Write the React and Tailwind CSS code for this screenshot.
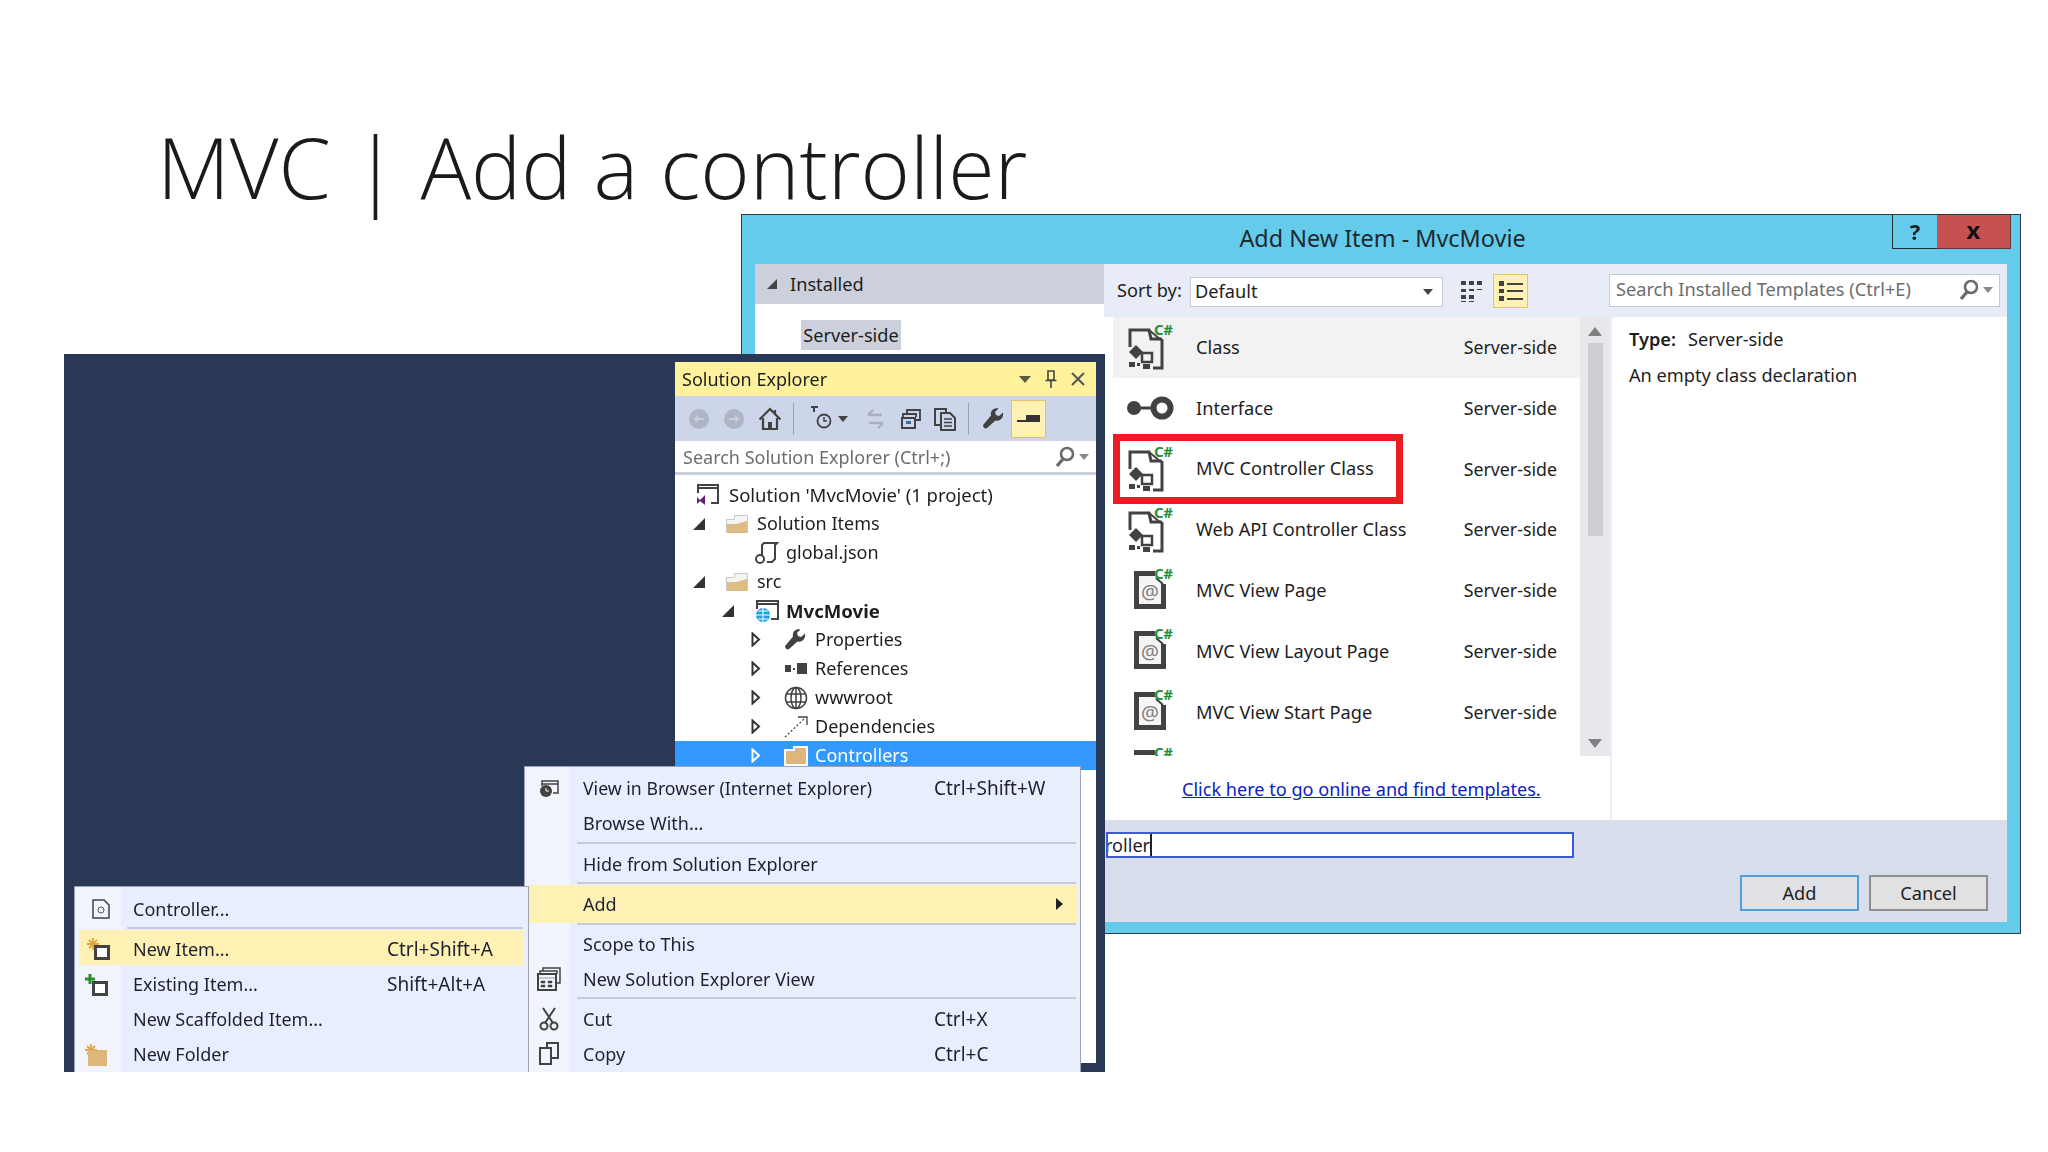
import React from "react";

const FONT = "font-['Noto_Sans','Open_Sans',sans-serif]";

function CsBadge() {
  return <span className="absolute left-[28px] top-0 text-[15px] leading-[14px] font-bold tracking-[-0.5px] text-[#2b8f3a]">C#</span>;
}
function CsIcon() {
  return (
    <div className="relative w-[48px] h-[50px] shrink-0">
      <svg className="absolute left-0 top-0" width="48" height="50" viewBox="0 0 48 50" fill="none">
        <path d="M4 25V8h19l2 9h11" stroke="#424242" strokeWidth="3" fill="none" />
        <path d="M23 8l12 10" stroke="#424242" strokeWidth="2" />
        <path d="M36 17v29h-9" stroke="#424242" strokeWidth="3" />
        <path d="M3 30l7-7 7 7-7 7z" fill="#424242" />
        <path d="M16 31h10v9H16z" stroke="#424242" strokeWidth="2.500" />
        <path d="M3 40h6v5H3zM17 42h7v5h-7zM11 41h3v3h-3z" fill="#424242" />
      </svg>
      <CsBadge />
    </div>
  );
}
function AtIcon() {
  return (
    <div className="relative w-[48px] h-[50px] shrink-0">
      <div className="absolute left-[8px] top-[5px] w-[32px] h-[38px] border-[5px] border-[#424242] bg-[#f5f5f5] flex items-end justify-center">
        <span className="text-[20px] leading-[24px] text-[#808080]">@</span>
      </div>
      <svg className="absolute left-[29px] top-[4px]" width="12" height="14" viewBox="0 0 12 14"><path d="M0 0h12v14H8L0 7z" fill="#fff" /><path d="M1 8l7 6" stroke="#424242" strokeWidth="2" /></svg>
      <CsBadge />
    </div>
  );
}
function ClippedIcon() {
  return (
    <div className="relative w-[48px] h-[50px] shrink-0">
      <div className="absolute left-[8px] top-[5px] w-[21px] h-[5px] bg-[#424242]" />
      <CsBadge />
    </div>
  );
}
function InterfaceIcon() {
  return (
    <svg width="48" height="26" viewBox="0 0 48 26" className="shrink-0">
      <circle cx="8" cy="13" r="7" fill="#424242" />
      <rect x="13" y="11.5" width="14" height="3" fill="#424242" />
      <circle cx="36" cy="13" r="8.500" fill="none" stroke="#424242" strokeWidth="6" />
    </svg>
  );
}
function MagIcon() {
  return (
    <svg width="20" height="22" viewBox="0 0 20 22" fill="none">
      <circle cx="12" cy="8" r="6" stroke="#6b6b6b" strokeWidth="2.6" />
      <path d="M8 13L2 20" stroke="#6b6b6b" strokeWidth="3.4" />
    </svg>
  );
}
function Down({ c = "#6b6b6b" }) {
  return <svg width="10" height="6" viewBox="0 0 10 6"><path d="M0 0h10L5 6z" fill={c} /></svg>;
}
function Wrench({ size = 22 }) {
  return (
    <svg width={size} height={size} viewBox="0 0 22 22" fill="none">
      <path d="M21 4.500l-4 3.500-3-1-1-3 3.500-3.500C12 -.5 8 2.500 9 7.500L1.500 16.500c-1.500 2 1.500 5 3.500 3.500L13.500 12.500C18 14 22 9.500 21 4.500z" fill="#424242" />
    </svg>
  );
}
function NavCircle({ dir, cls }) {
  return (
    <svg className={cls} width="20" height="20" viewBox="0 0 20 20">
      <circle cx="10" cy="10" r="10" fill="#aeb5c4" />
      <path d={dir < 0 ? "M15 9H9V6L4.500 10 9 14v-3h6z" : "M5 9h6V6l4.500 4L11 14v-3H5z"} fill="#c8cedb" />
    </svg>
  );
}

function ListRow({ icon, name, hi }) {
  return (
    <div className={`h-[60.8px] flex items-center pl-[13px] pr-[23px] ${hi ? "bg-[#f2f2f2]" : ""}`}>
      <div className="w-[70px] flex items-center">{icon}</div>
      <span className="flex-1 text-[18.2px] text-[#1e1e1e]">{name}</span>
      <span className="text-[17.8px] text-[#1e1e1e]">Server-side</span>
    </div>
  );
}

function Dialog() {
  return (
    <div className="absolute left-[741px] top-[214px] w-[1280px] h-[720px] bg-[#65cbeb] border border-[#2f3b3f] flex flex-col blur-[0.4px]">
      <div className="relative h-[49px] shrink-0 flex items-center justify-center pl-[3px] text-[23.4px] text-[#1e2a30]">
        <span className="-mt-[1px]">Add New Item - MvcMovie</span>
        <div className="absolute left-[1150px] top-0 w-[45px] h-[34px] border-l border-b border-[#1f2d33] flex items-center justify-center text-[22px] font-bold text-[#1e1e1e]">?</div>
        <div className="absolute left-[1195px] top-0 w-[74px] h-[34px] bg-[#c75050] border-b border-r border-[#5a3a3a] flex items-center justify-center text-[24px] leading-none font-bold text-[#111]"><span className="-mt-[4px]">x</span></div>
      </div>
      <div className="mx-[13px] h-[658px] flex flex-col bg-[#e8ecf7]">
        <div className="flex-1 flex min-h-0">
          <div className="w-[349px] shrink-0 bg-white flex flex-col">
            <div className="h-[40px] bg-[#ccd0dc] flex items-center pl-[12px] gap-[13px] text-[18.2px] text-[#1e1e1e]">
              <svg width="10" height="10" viewBox="0 0 10 10"><path d="M10 0v10H0z" fill="#444" /></svg>
              <span className="mt-[1px]">Installed</span>
            </div>
            <div className="pl-[46px] pt-[16px]">
              <span className="inline-flex h-[30px] w-[100px] items-center justify-center pt-[1px] bg-[#ccd0dc] text-[18.2px] text-[#1e1e1e]">Server-side</span>
            </div>
          </div>
          <div className="flex-1 flex flex-col min-w-0">
            <div className="h-[53px] shrink-0 flex items-center pl-[13px] text-[18.2px] text-[#1e1e1e]">
              <span className="w-[73px] mt-[1px]">Sort by:</span>
              <div className="w-[253px] h-[30px] mt-[3px] bg-white border border-[#c5cad6] flex items-center pl-[4px] pr-[9px] justify-between">
                <span>Default</span>
                <Down c="#444" />
              </div>
              <svg className="ml-[18px]" width="22" height="24" viewBox="0 0 22 24">
                <path d="M0 2h5v4H0zM8 2h5v4H8zM16 2h5v4h-5zM0 10h5v3H0zM8 10h5v2H8zM16 10h5v1h-5zM0 16h5v4H0zM8 16h5v4H8zM0 22h5v1H0zM8 22h5v1H8z" fill="#424242" />
              </svg>
              <div className="ml-[10px] w-[35px] h-[34px] bg-[#fff1b3] border border-[#e5c365] flex items-center justify-center">
                <svg width="24" height="22" viewBox="0 0 24 22">
                  <path d="M0 1h5v5H0zM0 9h5v4H0zM0 16h5v5H0z" fill="#424242" />
                  <path d="M8 3h16v2H8zM8 10h16v2H8zM8 18h16v2H8z" fill="#424242" />
                </svg>
              </div>
              <div className="ml-[81px] w-[391px] h-[33px] -mt-[1px] bg-white border border-[#c5cad6] flex items-center pl-[6px] pr-[6px] justify-between">
                <span className="text-[#6d6d6d]">Search Installed Templates (Ctrl+E)</span>
                <div className="flex items-center gap-[4px]"><MagIcon /><Down c="#888" /></div>
              </div>
            </div>
            <div className="flex-1 flex min-h-0">
              <div className="w-[506px] shrink-0 flex flex-col bg-white">
                <div className="flex h-[439px] shrink-0">
                  <div className="w-[476px] shrink-0 overflow-hidden pl-[9px] bg-white">
                    <ListRow hi icon={<CsIcon />} name="Class" />
                    <ListRow icon={<InterfaceIcon />} name="Interface" />
                    <ListRow icon={<CsIcon />} name="MVC Controller Class" />
                    <ListRow icon={<CsIcon />} name="Web API Controller Class" />
                    <ListRow icon={<AtIcon />} name="MVC View Page" />
                    <ListRow icon={<AtIcon />} name="MVC View Layout Page" />
                    <ListRow icon={<AtIcon />} name="MVC View Start Page" />
                    <div className="pl-[13px] pt-[2px]"><ClippedIcon /></div>
                  </div>
                  <div className="w-[30px] shrink-0 bg-[#e8e8ec] flex flex-col items-center pt-[10px] pb-[8px]">
                    <svg width="14" height="9" viewBox="0 0 14 9"><path d="M7 0l7 9H0z" fill="#808080" /></svg>
                    <div className="w-[15px] h-[193px] bg-[#cdcdd2] mt-[7px] mb-auto" />
                    <svg width="14" height="9" viewBox="0 0 14 9"><path d="M0 0h14L7 9z" fill="#808080" /></svg>
                  </div>
                </div>
                <div className="flex-1 pl-[78px] pt-[20px]">
                  <span className="text-[18.1px] text-[#0a22c8] underline">Click here to go online and find templates.</span>
                </div>
              </div>
              <div className="w-[2px] bg-[#eceef6]" />
              <div className="flex-1 bg-white pl-[17px] pt-[5px] text-[18.2px] text-[#1e1e1e]">
                <div className="h-[36px] flex items-center"><b className="font-semibold mr-[12px]">Type:</b>Server-side</div>
                <div className="h-[36px] flex items-center">An empty class declaration</div>
              </div>
            </div>
          </div>
        </div>
        <div className="h-[102px] shrink-0 bg-[#d9deec]">
          <div className="ml-[351px] mt-[12px] w-[468px] h-[26px] bg-white border-2 border-[#3f5bd0] flex items-center text-[18.1px] leading-none text-[#1e1e1e] overflow-hidden">
            <span className="-ml-[3px]">roller</span>
            <span className="w-[2px] h-[24px] bg-[#222]" />
          </div>
          <div className="mt-[17px] ml-[985px] flex gap-[10px] text-[18.2px] text-[#1e1e1e]">
            <div className="w-[119px] h-[36px] pt-[1px] bg-[#dfe1e6] border-2 border-[#4f9ee0] flex items-center justify-center">Add</div>
            <div className="w-[119px] h-[36px] pt-[1px] bg-[#e1e1e1] border-2 border-[#8f8f8f] flex items-center justify-center">Cancel</div>
          </div>
        </div>
      </div>
    </div>
  );
}

function Caret({ open, white }) {
  if (open) return <svg width="12" height="12" viewBox="0 0 12 12"><path d="M12 0v12H0z" fill="#333" /></svg>;
  return <svg width="10" height="15" viewBox="0 0 10 15" fill="none"><path d="M1.500 1.500L8 7.500l-6.500 6z" stroke={white ? "#fff" : "#333"} strokeWidth="2" /></svg>;
}
function OpenFolder() {
  return (
    <svg width="22" height="18" viewBox="0 0 22 18">
      <path d="M.5 4.500h8v-4h13v17H.5z" fill="#f4f4f4" stroke="#c9c9c9" />
      <path d="M1 9h9l11-3v12H1z" fill="#dcb67a" opacity=".9" />
    </svg>
  );
}
function SolidFolder() {
  return (
    <svg width="24" height="20" viewBox="0 0 24 20">
      <path d="M1 4h9V1h13v18H1z" fill="#dcb67a" stroke="#fff" strokeWidth="2" />
    </svg>
  );
}
function TreeRow({ indent, caret, white, icon, bold, sel, children }) {
  return (
    <div className={`h-[29px] shrink-0 flex items-center text-[18px] ${sel ? "bg-[#3399ff] text-white" : "text-[#1e1e1e]"}`} style={{ paddingLeft: indent }}>
      <div className="w-[29px] flex items-center">{caret !== undefined && <Caret open={caret} white={white} />}</div>
      <div className="w-[35px] pl-[4px] flex items-center">{icon}</div>
      <span className={bold ? "font-bold text-[18.6px]" : ""}>{children}</span>
    </div>
  );
}
function ToolSep() {
  return <div className="w-px h-[32px] bg-[#9aa2b4]" />;
}

function Explorer() {
  return (
    <div className="absolute left-[64px] top-[354px] w-[1041px] h-[718px] bg-[#293955] blur-[0.4px]">
      <div className="absolute left-[611px] top-[8px] w-[421px] h-[701px] bg-white flex flex-col overflow-hidden">
        <div className="h-[34px] shrink-0 bg-[#fff29d] flex items-center pl-[7px] pr-[11px] text-[18px] text-[#1e1e1e]">
          <span className="flex-1">Solution Explorer</span>
          <div className="flex items-center gap-[14px]">
            <svg width="12" height="7" viewBox="0 0 12 7"><path d="M0 0h12L6 7z" fill="#5a5a3c" /></svg>
            <svg width="12" height="18" viewBox="0 0 12 18" fill="none"><path d="M3 1h6v9H3zM0.500 10.500h11M6 10v8" stroke="#444" strokeWidth="1.600" /></svg>
            <svg width="14" height="14" viewBox="0 0 14 14" fill="none"><path d="M1 1l12 12M13 1L1 13" stroke="#555" strokeWidth="2" /></svg>
          </div>
        </div>
        <div className="h-[45px] shrink-0 bg-[#ccd5e9] flex items-center pl-[14px]">
          <NavCircle dir={-1} cls="mr-[15px]" />
          <NavCircle dir={1} cls="mr-[14px]" />
          <svg className="mr-[11px]" width="24" height="24" viewBox="0 0 24 24" fill="none">
            <path d="M1.500 12.500L12 2l10.500 10.500M17 3v5" stroke="#424242" strokeWidth="2.200" />
            <path d="M5 11v11h14V11" stroke="#424242" strokeWidth="2.200" />
            <path d="M10 15h4v7h-4z" fill="#424242" />
          </svg>
          <ToolSep />
          <svg className="ml-[16px]" width="24" height="26" viewBox="0 0 24 26" fill="none">
            <path d="M1 1h7M4 1v5" stroke="#424242" strokeWidth="2" />
            <circle cx="14" cy="15" r="6.500" stroke="#424242" strokeWidth="1.800" />
            <path d="M14 11v4h3" stroke="#424242" strokeWidth="1.500" />
          </svg>
          <svg className="ml-[4px]" width="10" height="6" viewBox="0 0 10 6"><path d="M0 0h10L5 6z" fill="#424242" /></svg>
          <svg className="ml-[18px]" width="20" height="22" viewBox="0 0 20 22" fill="none">
            <path d="M16 7H2M7 2L2 7M3 15h14M17 15l-5 5" stroke="#a9afbd" strokeWidth="2.400" />
          </svg>
          <svg className="ml-[15px]" width="20" height="20" viewBox="0 0 20 20" fill="none">
            <path d="M6 5V1h13v10h-4M2 9V5h13v3" stroke="#424242" strokeWidth="1.800" />
            <rect x="1" y="9" width="13" height="10" stroke="#424242" strokeWidth="2" />
            <rect x="5" y="12" width="5" height="3" fill="#3a6ea5" />
          </svg>
          <svg className="ml-[12px]" width="24" height="24" viewBox="0 0 24 24" fill="none">
            <path d="M7 18H2V2h11v4" stroke="#424242" strokeWidth="2" />
            <path d="M8 6h9l5 5v12H8z" stroke="#424242" strokeWidth="2" />
            <path d="M11 12h8M11 15.500h8M11 19h8" stroke="#424242" strokeWidth="1.500" />
          </svg>
          <div className="ml-[11px]"><ToolSep /></div>
          <div className="ml-[13px]"><Wrench size={22} /></div>
          <div className="ml-[7px] w-[35px] h-[38px] bg-[#fff1b3] border border-[#e5c365] flex items-center justify-center">
            <svg width="23" height="8" viewBox="0 0 23 8"><path d="M0 5h9v2H0zM9 0h14v7H9z" fill="#333" /></svg>
          </div>
        </div>
        <div className="h-[34px] shrink-0 bg-white border-b-[3px] border-[#ccd0dc] flex items-center pl-[8px] pr-[7px] text-[18px] text-[#6d6d6d] justify-between">
          <span className="mt-[1px]">Search Solution Explorer (Ctrl+;)</span>
          <div className="flex items-center gap-[4px]"><MagIcon /><Down c="#888" /></div>
        </div>
        <div className="pt-[5px] flex flex-col">
          <TreeRow indent={0} icon={<svg className="-ml-[12px]" width="24" height="22" viewBox="0 0 24 22" fill="none"><path d="M2 9V1h20v18h-7" stroke="#424242" strokeWidth="2" /><path d="M2 4h20" stroke="#424242" strokeWidth="2" /><path d="M1 13l3 3 5-5v10l-5-4-3 3z" fill="#68217a" /></svg>}>
            <span className="-ml-[10px] inline-block text-[18.5px]">Solution 'MvcMovie' (1 project)</span>
          </TreeRow>
          <TreeRow indent={18} caret={true} icon={<OpenFolder />}>Solution Items</TreeRow>
          <TreeRow indent={47} icon={<svg width="24" height="22" viewBox="0 0 24 22" fill="none"><path d="M7 14V3l2-2h13l-2 2v14l-3 3h-5" stroke="#424242" strokeWidth="2" /><circle cx="5" cy="17" r="4" stroke="#424242" strokeWidth="2" /></svg>}>global.json</TreeRow>
          <TreeRow indent={18} caret={true} icon={<OpenFolder />}>src</TreeRow>
          <TreeRow indent={47} caret={true} bold icon={<svg width="24" height="22" viewBox="0 0 24 22" fill="none"><path d="M2 9V1h21v18h-7" stroke="#424242" strokeWidth="2" /><path d="M2 4h21" stroke="#424242" strokeWidth="2" /><circle cx="8" cy="15" r="7" fill="#1ba1e2" /><path d="M1 15h14M8 8v14M3 11h10M3 19h10" stroke="#fff" strokeWidth="1" /></svg>}>MvcMovie</TreeRow>
          <TreeRow indent={76} caret={false} icon={<Wrench size={22} />}>Properties</TreeRow>
          <TreeRow indent={76} caret={false} icon={<svg width="24" height="14" viewBox="0 0 24 14"><path d="M1 3h6v7H1zM9 6h2v2H9zM13 1h10v11H13z" fill="#424242" /></svg>}>References</TreeRow>
          <TreeRow indent={76} caret={false} icon={<svg width="24" height="24" viewBox="0 0 24 24" fill="none" stroke="#424242" strokeWidth="1.500"><circle cx="12" cy="12" r="10.500" /><ellipse cx="12" cy="12" rx="5" ry="10.500" /><path d="M2 8h20M2 16h20M12 1v22" /></svg>}>wwwroot</TreeRow>
          <TreeRow indent={76} caret={false} icon={<svg width="24" height="22" viewBox="0 0 24 22" fill="none"><path d="M1 21L21 2" stroke="#424242" strokeWidth="1.300" strokeDasharray="2 2" /><path d="M14 1h9v8" stroke="#424242" strokeWidth="1.300" /></svg>}>Dependencies</TreeRow>
          <TreeRow indent={76} caret={false} white sel icon={<SolidFolder />}>Controllers</TreeRow>
        </div>
      </div>
    </div>
  );
}

function MenuRow({ icon, label, labelCls = "", sc, h = "h-[35px]", hi, arrow, gutter, textLeft, scLeft, cls = "" }) {
  return (
    <div className={`${h} ${cls} flex items-center relative shrink-0 text-[18px] text-[#1e2030] ${hi ? "bg-[#fff1b3]" : ""}`}>
      <div className="shrink-0 flex items-center justify-center" style={{ width: gutter }}>{icon}</div>
      <span className={`shrink-0 ${labelCls}`} style={{ width: scLeft, marginLeft: textLeft }}>{label}</span>
      {sc && <span className="text-[19px]">{sc}</span>}
      {arrow && <svg className="absolute right-[14px]" width="7" height="12" viewBox="0 0 7 12"><path d="M0 0l7 6-7 6z" fill="#222" /></svg>}
    </div>
  );
}
function MenuSep({ left, right, cls = "" }) {
  return <div className={`h-[2px] shrink-0 bg-[#c5cbdc] ${cls}`} style={{ marginLeft: left, marginRight: right }} />;
}

function MainMenu() {
  const p = { gutter: 47, textLeft: 11, scLeft: 351 };
  return (
    <div className="absolute left-[524px] top-[766px] w-[557px] h-[306px] bg-[#e9eefc] border-t border-l border-r border-[#9ba3b5] flex flex-col overflow-hidden blur-[0.4px]">
      <div className="absolute left-0 top-0 bottom-0 w-[45px] bg-[#f1f4fd]" />
      <div className="relative flex flex-col pt-[4px]">
        <MenuRow {...p} labelCls="text-[17.7px]" icon={<svg width="20" height="18" viewBox="0 0 20 18" fill="none"><path d="M3 6V1h16v12h-5" stroke="#424242" strokeWidth="1.500" /><path d="M3 4h16" stroke="#424242" strokeWidth="1.500" /><circle cx="7" cy="11" r="6" fill="#424242" /><path d="M7 8v3h3" stroke="#fff" /></svg>} label="View in Browser (Internet Explorer)" sc="Ctrl+Shift+W" />
        <MenuRow {...p} label="Browse With..." />
        <MenuSep left={52} right={4} cls="mt-[1px]" />
        <MenuRow {...p} cls="mt-[2.5px]" label="Hide from Solution Explorer" />
        <MenuSep left={52} right={4} cls="mt-[0.5px]" />
        <div className="ml-[4px] mr-[3px] mt-[1px]"><MenuRow gutter={43} textLeft={11} scLeft={351} h="h-[38px]" hi arrow label="Add" /></div>
        <MenuSep left={52} right={4} />
        <MenuRow {...p} cls="mt-[1.5px]" label="Scope to This" />
        <MenuRow {...p} icon={<svg width="24" height="24" viewBox="0 0 24 24" fill="none"><path d="M6 4V1h17v15h-3" stroke="#424242" strokeWidth="1.500" /><path d="M3 7V4h17v3" stroke="#424242" strokeWidth="1.500" /><rect x="1" y="7" width="18" height="16" stroke="#424242" strokeWidth="2" /><path d="M1 11h18M4 14h4v2H4zM11 14h4v2h-4zM4 18h4v2H4zM11 18h4v2h-4z" stroke="#424242" fill="#424242" strokeWidth=".5" /></svg>} label="New Solution Explorer View" />
        <MenuSep left={52} right={4} cls="mt-[0.5px]" />
        <MenuRow {...p} cls="mt-[2.5px]" icon={<svg width="20" height="24" viewBox="0 0 20 24" fill="none" stroke="#424242" strokeWidth="2"><path d="M4 1l10 15M16 1L6 16" /><circle cx="5" cy="19" r="3.500" /><circle cx="15" cy="19" r="3.500" /></svg>} label="Cut" sc="Ctrl+X" />
        <MenuRow {...p} icon={<svg width="20" height="24" viewBox="0 0 20 24" fill="none" stroke="#424242" strokeWidth="2"><path d="M8 5V1h11v15h-6" /><rect x="1" y="6" width="11" height="16" /></svg>} label="Copy" sc="Ctrl+C" />
      </div>
    </div>
  );
}

function Star() {
  return <svg className="absolute left-0 top-0" width="12" height="12" viewBox="0 0 12 12"><path d="M6 0v12M0 6h12M2 2l8 8M10 2l-8 8" stroke="#e2a53d" strokeWidth="1.800" /></svg>;
}
function NewIcon({ plus }) {
  return (
    <div className="relative w-[24px] h-[22px] -ml-[3px]">
      {plus ? <svg className="absolute left-0 top-0" width="10" height="10" viewBox="0 0 10 10"><path d="M3.500 0h3v3.500H10v3H6.500V10h-3V6.500H0v-3h3.500z" fill="#2c8f2c" /></svg> : <Star />}
      <div className="absolute left-[7px] top-[7px] w-[16px] h-[15px] border-[3px] border-[#424242] bg-white" />
    </div>
  );
}

function SubMenu() {
  const p = { gutter: 46, textLeft: 12, scLeft: 254 };
  return (
    <div className="absolute left-[74px] top-[886px] w-[455px] h-[186px] bg-[#e9eefc] border-t border-l border-r border-[#9ba3b5] flex flex-col overflow-hidden blur-[0.4px]">
      <div className="absolute left-0 top-0 bottom-0 w-[46px] bg-[#f1f4fd]" />
      <div className="relative flex flex-col pt-[4px]">
        <MenuRow {...p} h="h-[36px]" icon={<svg className="ml-[5px]" width="18" height="20" viewBox="0 0 18 20" fill="none"><path d="M1 1h11l5 5v13H1z" stroke="#424242" strokeWidth="1.500" /><circle cx="9" cy="11" r="3" stroke="#555" /></svg>} label="Controller..." />
        <MenuSep left={52} right={5} />
        <div className="ml-[4px] mr-[5px] mt-[1px] mb-[2px]"><MenuRow gutter={42} textLeft={12} scLeft={254} h="h-[35px]" cls="pt-[3px]" hi icon={<NewIcon />} label="New Item..." sc="Ctrl+Shift+A" /></div>
        <MenuRow {...p} icon={<NewIcon plus />} label="Existing Item..." sc="Shift+Alt+A" />
        <MenuRow {...p} label="New Scaffolded Item..." />
        <MenuRow {...p} icon={<div className="relative w-[24px] h-[22px] -ml-[3px]"><Star /><div className="absolute left-[3px] top-[6px] w-[19px] h-[16px] bg-[#dcb67a]" /></div>} label="New Folder" />
      </div>
    </div>
  );
}

function RedBox() {
  return <div className="absolute left-[1113px] top-[434px] w-[290px] h-[70px] border-[7px] border-[#ed1c24]" />;
}

export default function App() {
  return (
    <div className={`relative w-[2048px] h-[1152px] bg-white overflow-hidden ${FONT}`}>
      <h1 className="absolute left-[157px] top-[112px] text-[84.4px] leading-[110px] font-light text-[#1a1a1a] font-['Open_Sans',sans-serif] whitespace-nowrap">MVC | Add a controller</h1>
      <Dialog />
      <RedBox />
      <Explorer />
      <MainMenu />
      <SubMenu />
    </div>
  );
}
